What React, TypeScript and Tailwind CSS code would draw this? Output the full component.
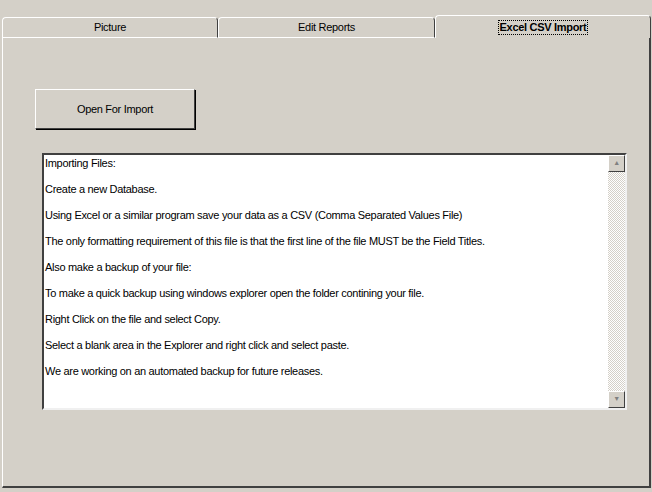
const LINES = [
  'Importing Files:',
  'Create a new Database.',
  'Using Excel or a similar program save your data as a CSV (Comma Separated Values File)',
  'The only formatting requirement of this file is that the first line of the file MUST be the Field Titles.',
  'Also make a backup of your file:',
  'To make a quick backup using windows explorer open the folder contining your file.',
  'Right Click on the file and select Copy.',
  'Select a blank area in the Explorer and right click and select paste.',
  'We are working on an automated backup for future releases.',
];

function Tab({ label, active, w }: { label: string; active?: boolean; w: string }) {
  return (
    <div
      className={`${w} flex items-center justify-center rounded-t-[4px] border-t border-l border-r border-t-white border-l-white border-r-[#404040] ${
        active ? 'h-[23px] bg-[#d4d0c8] font-bold' : 'h-[21px] border-b border-b-white bg-[#d4d0c8]'
      }`}
    >
      <span className={active ? 'border border-dotted border-black px-px leading-[13px]' : ''}>{label}</span>
    </div>
  );
}

export default function App() {
  return (
    <div
      className="w-[652px] h-[492px] bg-[#d4d0c8] text-[11px] tracking-[-0.3px] text-black overflow-hidden"
      style={{ fontFamily: '"Liberation Sans", Arial, sans-serif' }}
    >
      <div className="h-[15px]" />
      <div className="flex items-end pl-[2px] pr-[1px]">
        <Tab label="Picture" w="w-[216px]" />
        <Tab label="Edit Reports" w="w-[217px]" />
        <Tab label="Excel CSV Import" w="w-[216px]" active />
      </div>
      <div className="ml-[2px] mr-[1px] h-[450px] border-l border-r-2 border-b-2 border-l-white border-r-[#404040] border-b-[#404040] relative">
        <div className="h-[51px]" />
        <div className="ml-[32px] w-[160px] h-[40px] flex items-center justify-center border border-t-white border-l-white border-r-[#404040] border-b-[#404040] shadow-[1px_1px_0_#000]">
          Open For Import
        </div>
        <div className="h-[24px]" />
        <div className="ml-[39px] w-[585px] h-[257px] flex bg-white border-2 border-t-[#404040] border-l-[#404040] border-r-[#f0f0f0] border-b-[#f0f0f0]">
          <div className="flex-1 pl-[1px] pt-[1px]">
            {LINES.map((l) => (
              <div key={l} className="h-[26px] leading-[14px]">
                {l}
              </div>
            ))}
          </div>
          <div
            className="w-[17px] flex flex-col justify-between"
            style={{ backgroundImage: 'repeating-conic-gradient(#d4d0c8 0 25%, #fff 0 50%)', backgroundSize: '2px 2px' }}
          >
            <div className="h-[17px] bg-[#d4d0c8] border border-t-white border-l-white border-r-[#404040] border-b-[#404040] flex items-center justify-center text-[7px] text-[#808080]">
              ▲
            </div>
            <div className="h-[17px] bg-[#d4d0c8] border border-t-white border-l-white border-r-[#404040] border-b-[#404040] flex items-center justify-center text-[7px] text-[#808080]">
              ▼
            </div>
          </div>
        </div>
      </div>
    </div>
  );
}
